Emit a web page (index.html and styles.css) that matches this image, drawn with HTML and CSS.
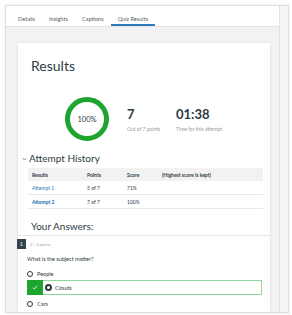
FILE: index.html
```html
<!DOCTYPE html>
<html lang="en">
<head>
<meta charset="utf-8">
<title>Quiz Results</title>
<link rel="stylesheet" href="styles.css">
</head>
<body>
<div class="frame">
  <div class="main">
    <nav class="tabs">
      <span class="tab">Details</span>
      <span class="tab">Insights</span>
      <span class="tab">Captions</span>
      <span class="tab active">Quiz Results</span>
    </nav>
    <div class="content">
      <section class="card">
        <h1 class="title">Results</h1>
        <div class="stats">
          <div class="ring"><span>100%</span></div>
          <div class="stat first">
            <div class="num">7</div>
            <div class="lbl">Out of 7 points</div>
          </div>
          <div class="stat">
            <div class="num">01:38</div>
            <div class="lbl">Time for this attempt</div>
          </div>
        </div>
        <h2 class="history">
          <svg class="chev" width="5" height="4" viewBox="0 0 5 4"><polyline points="0.6,1 2.5,3 4.4,1" fill="none" stroke="#6b7780" stroke-width="0.8"/></svg>
          <span>Attempt History</span>
        </h2>
        <div class="attempts">
          <div class="row head">
            <span class="c1">Results</span><span class="c2">Points</span><span class="c3">Score</span><span class="c4">(Highest score is kept)</span>
          </div>
          <div class="row">
            <span class="c1"><a class="link">Attempt 1</a></span><span class="c2">5 of 7</span><span class="c3">71%</span><span class="c4"></span>
          </div>
          <div class="row">
            <span class="c1"><a class="link kept">Attempt 2</a></span><span class="c2">7 of 7</span><span class="c3">100%</span><span class="c4"></span>
          </div>
        </div>
        <h2 class="answers">Your Answers:</h2>
        <div class="question">
          <div class="qhead"><span class="qnum">1</span><span class="qpts">2 / 2 points</span></div>
          <p class="qtext">What is the subject matter?</p>
          <div class="opt first"><span class="radio"></span><span>People</span></div>
          <div class="opt correct">
            <span class="mark"><svg width="6" height="5" viewBox="0 0 6 5"><polyline points="0.8,2.6 2.3,4 5.2,0.9" fill="none" stroke="#fff" stroke-width="0.8"/></svg></span>
            <span class="radio on"></span><span>Clouds</span>
          </div>
          <div class="opt"><span class="radio"></span><span>Cars</span></div>
        </div>
      </section>
    </div>
  </div>
  <div class="strip"></div>
</div>
</body>
</html>
```
FILE: styles.css
```css
html, body {
  margin: 0;
  padding: 0;
}
body {
  background: #fff;
  font-family: Lato, "Noto Sans", sans-serif;
  color: #2d3b45;
  height: 315px;
  overflow: hidden;
}
.frame {
  margin: 5px 3px 0 5px;
  height: 308px;
  box-sizing: border-box;
  border: 1px solid #dedede;
  box-shadow: 0 0 3px rgba(0, 0, 0, 0.08);
  display: flex;
  overflow: hidden;
}
.main {
  flex: 1;
  background: #f2f2f2;
  display: flex;
  flex-direction: column;
  min-width: 0;
}
.strip {
  width: 8px;
  background: #f4f4f4;
  border-left: 1px solid #e2e2e2;
}
.tabs {
  background: #fff;
  height: 21px;
  box-sizing: border-box;
  border-bottom: 1px solid #e4e4e4;
  display: flex;
  padding-left: 5px;
  flex-shrink: 0;
}
.tab {
  display: flex;
  align-items: center;
  box-sizing: border-box;
  height: 20px;
  padding: 4px 7px 0;
  font-size: 5.6px;
  color: #555f66;
}
.tab.active {
  border-bottom: 2px solid #2b7abc;
  padding-top: 6px;
}
.content {
  padding: 16px 9px 0 12px;
  flex: 1;
  display: flex;
  flex-direction: column;
}
.card {
  flex: 1;
  background: #fff;
  box-shadow: 0 0 2px rgba(0, 0, 0, 0.14);
  padding: 14px 0 0 13px;
}
.title {
  margin: 0;
  font-size: 14px;
  line-height: 18px;
  font-weight: 400;
}
.stats {
  display: flex;
  align-items: center;
  margin-top: 22px;
  padding-left: 34px;
}
.ring {
  width: 44px;
  height: 44px;
  box-sizing: border-box;
  border: 5px solid #1ea42f;
  border-radius: 50%;
  display: flex;
  align-items: center;
  justify-content: center;
  font-size: 7.5px;
  color: #2d3b45;
}
.stat {
  padding-top: 2px;
}
.stat.first {
  margin-left: 18px;
  width: 49px;
}
.num {
  font-size: 13px;
  line-height: 15px;
  font-weight: 700;
}
.lbl {
  margin-top: 4px;
  font-size: 5px;
  line-height: 7px;
  color: #959ea5;
}
.history {
  margin: 10px 0 0 -9px;
  display: flex;
  align-items: center;
  gap: 2px;
  font-size: 10px;
  line-height: 14px;
  font-weight: 400;
}
.chev {
  margin-top: 1px;
}
.attempts {
  margin: 3px 0 0 -3px;
  width: 235px;
  font-size: 5px;
}
.row {
  display: grid;
  grid-template-columns: 55px 40px 35px 1fr;
  height: 14px;
  box-sizing: border-box;
  border-bottom: 1px solid #e8e8e8;
  align-items: center;
}
.row.head {
  height: 13px;
  background: #f2f2f2;
  border-bottom: none;
  font-weight: 700;
}
.row span {
  padding-left: 4px;
}
.link {
  color: #2b7abc;
}
.link.kept {
  font-weight: 700;
  color: #2170b3;
}
.answers {
  margin: 10px 0 0;
  padding-bottom: 2px;
  font-size: 10px;
  line-height: 14px;
  font-weight: 400;
}
.question {
  margin-left: -13px;
  border-top: 1px solid #e8e8e8;
  padding-left: 9px;
  padding-right: 9px;
}
.qhead {
  display: flex;
  align-items: center;
  gap: 4px;
  margin: 3px 0 0 -10px;
}
.qnum {
  width: 9px;
  height: 10px;
  background: #34444f;
  color: #fff;
  font-size: 5px;
  display: flex;
  align-items: center;
  justify-content: center;
}
.qpts {
  font-size: 4px;
  color: #9aa3a9;
}
.qtext {
  margin: 6px 0 0;
  font-size: 5.5px;
  line-height: 8px;
}
.opt {
  display: flex;
  align-items: center;
  gap: 4px;
  height: 10px;
  width: 235px;
  font-size: 5.5px;
  margin-top: 4px;
}
.opt.first {
  margin-top: 6px;
}
.radio {
  width: 6px;
  height: 6px;
  box-sizing: border-box;
  border: 1px solid #2d3b45;
  border-radius: 50%;
}
.opt.correct {
  height: 15px;
  box-sizing: border-box;
  border: 1px solid #8fd498;
  margin-top: 1px;
  gap: 0;
}
.mark {
  width: 16px;
  height: 15px;
  margin-left: -1px;
  background: #1ea42f;
  display: flex;
  align-items: center;
  justify-content: center;
}
.radio.on {
  width: 7px;
  height: 7px;
  border: 2.2px solid #2d3b45;
  margin: 0 3px 0 2px;
}
```
